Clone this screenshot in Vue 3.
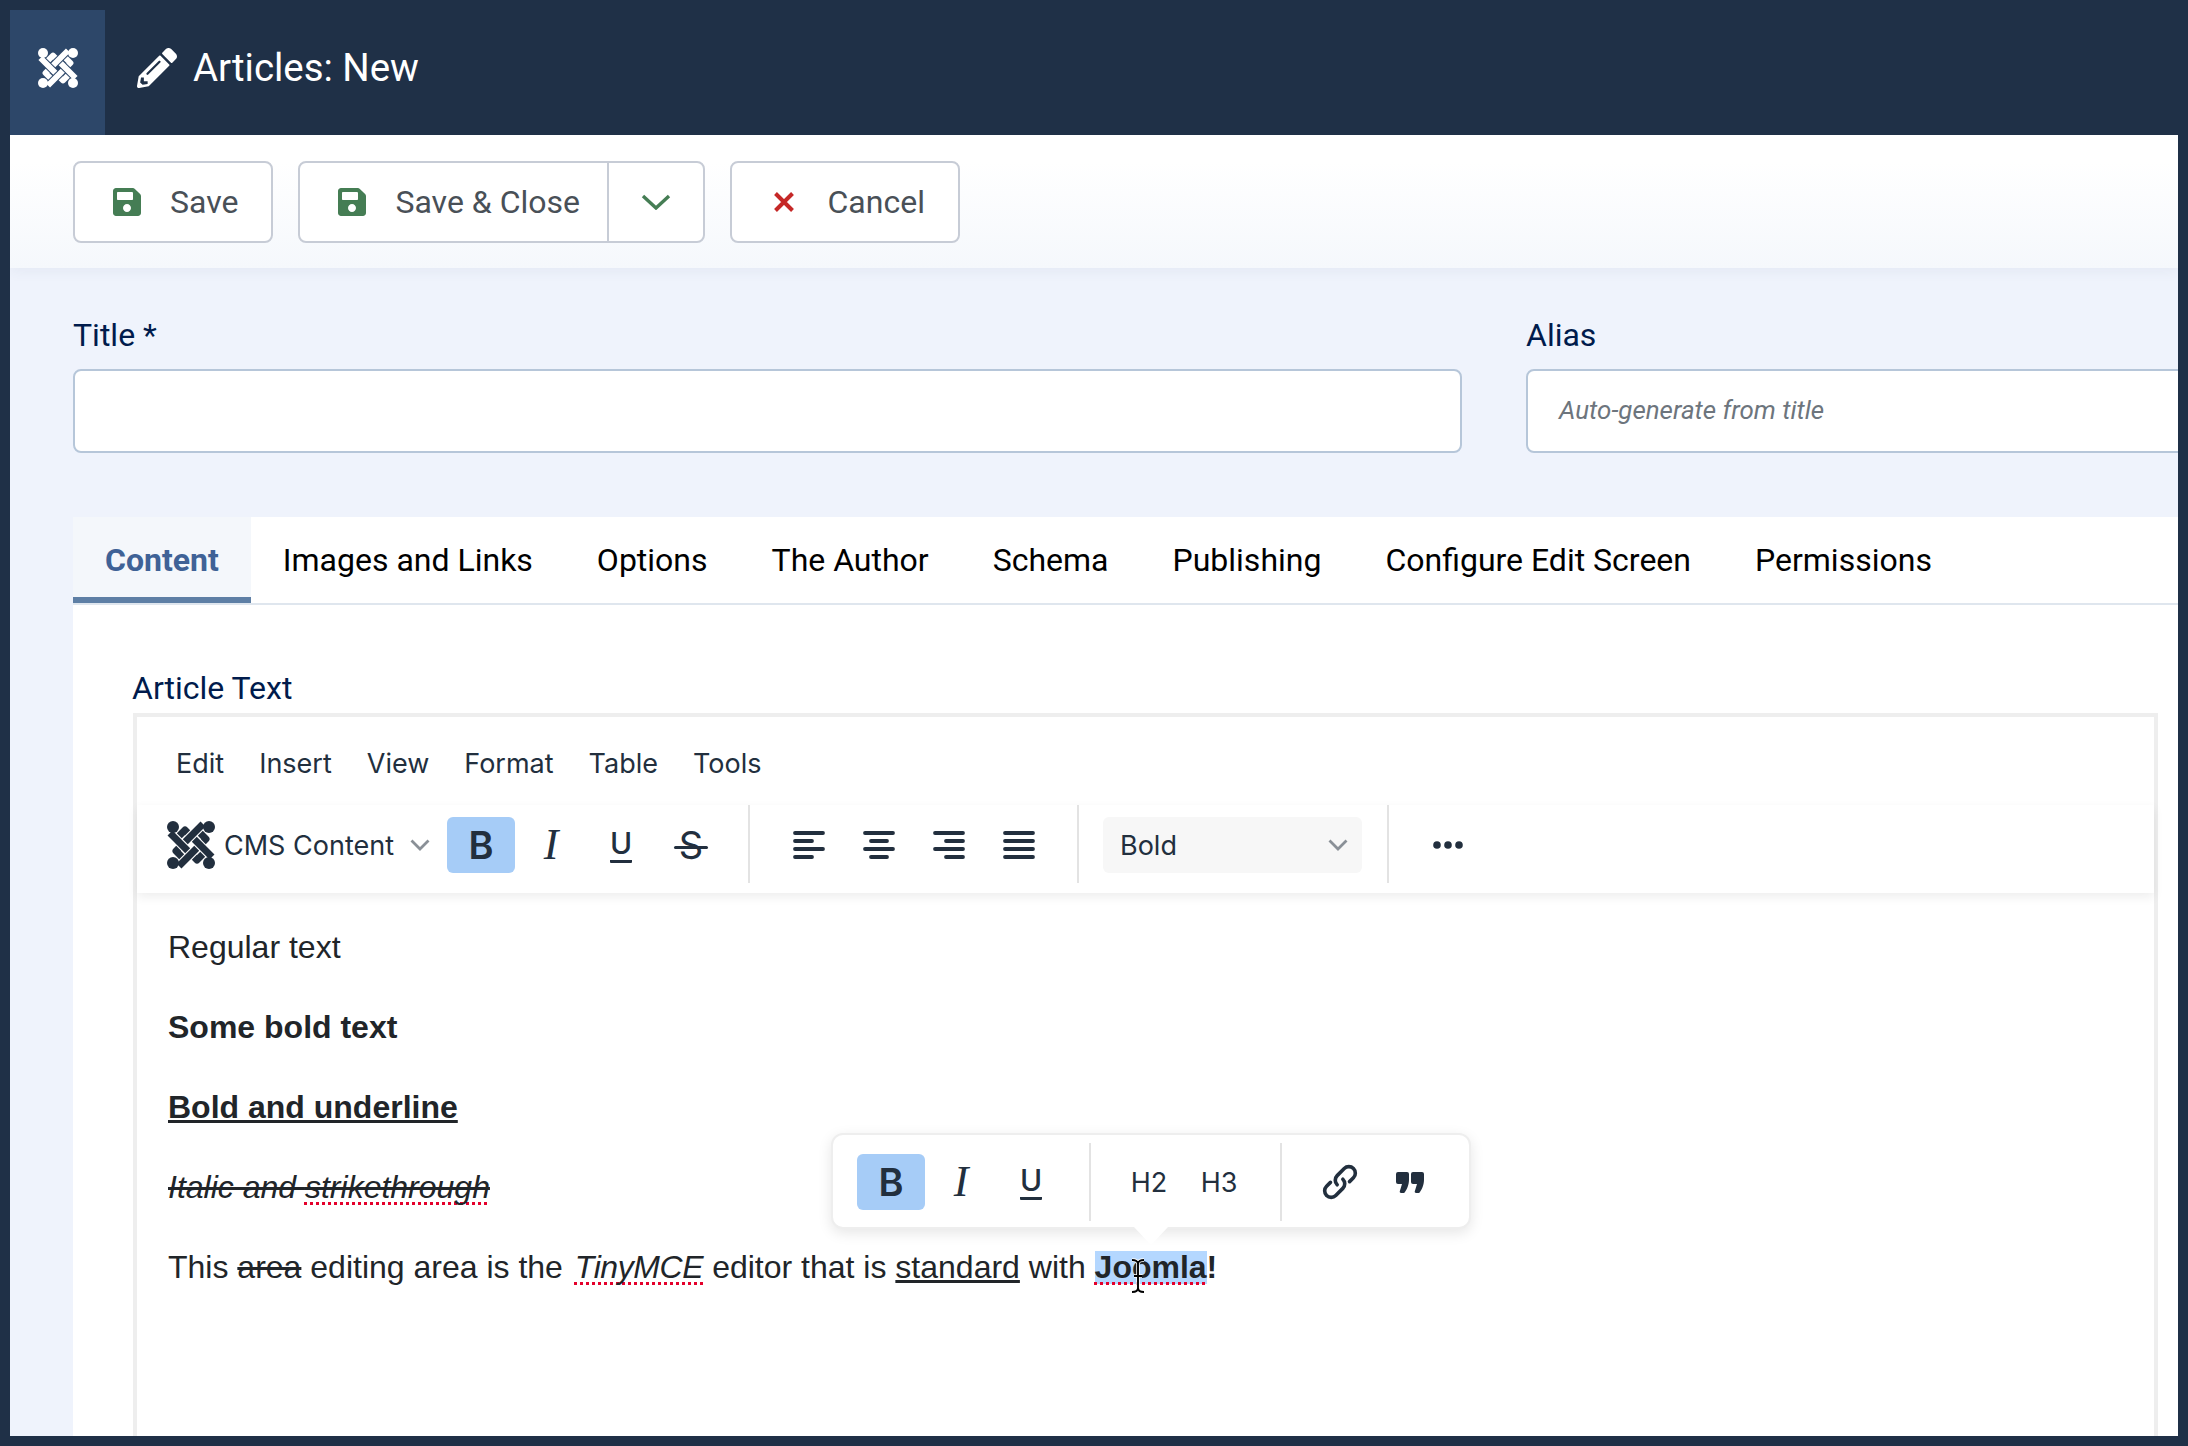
<script setup>
const tabs = ['Content', 'Images and Links', 'Options', 'The Author', 'Schema', 'Publishing', 'Configure Edit Screen', 'Permissions']
const menus = ['Edit', 'Insert', 'View', 'Format', 'Table', 'Tools']
const knot = 'M3 12L20.700 29.700M27.300 36.300L30 39L35.700 33.300M36 3L18.300 20.700M11.700 27.300L9 30L14.700 35.700M45 36L27.300 18.300M20.700 11.700L18 9L12.300 14.700M12 45L29.700 27.300M36.300 20.700L39 18L33.300 12.300'
const aligns = [
  { name: 'left', lines: [[2, 30], [2, 19], [2, 30], [2, 19]] },
  { name: 'center', lines: [[2, 30], [8, 24], [2, 30], [8, 24]] },
  { name: 'right', lines: [[2, 30], [13, 30], [2, 30], [13, 30]] },
  { name: 'justify', lines: [[2, 30], [2, 30], [2, 30], [2, 30]] }
]
const savePath = 'M433.941 129.941l-83.882-83.882A48 48 0 0 0 316.118 32H48C21.49 32 0 53.49 0 80v352c0 26.51 21.49 48 48 48h352c26.51 0 48-21.49 48-48V163.882a48 48 0 0 0-14.059-33.941zM224 416c-35.346 0-64-28.654-64-64 0-35.346 28.654-64 64-64s64 28.654 64 64c0 35.346-28.654 64-64 64zm96-304.52V212c0 6.627-5.373 12-12 12H76c-6.627 0-12-5.373-12-12V108c0-6.627 5.373-12 12-12h228.52c3.183 0 6.235 1.264 8.485 3.515l3.48 3.48A11.996 11.996 0 0 1 320 111.48z'
</script>

<template>
  <div class="root">
    <header class="header">
      <div class="logo-box">
        <svg class="logo-white" viewBox="0 0 48 48">
          <path :d="knot" fill="none" stroke="#fff" stroke-width="7" stroke-linejoin="round" />
          <circle cx="6" cy="6" r="6" fill="#fff" /><circle cx="42" cy="6" r="6" fill="#fff" />
          <circle cx="6" cy="42" r="6" fill="#fff" /><circle cx="42" cy="42" r="6" fill="#fff" />
        </svg>
      </div>
      <svg class="pencil" viewBox="0 0 512 512"><path fill="#fff" d="M497.9 142.1l-46.1 46.1c-4.7 4.7-12.3 4.7-17 0l-111-111c-4.7-4.7-4.7-12.3 0-17l46.1-46.1c18.7-18.7 49.1-18.7 67.9 0l60.1 60.1c18.8 18.7 18.8 49.1 0 67.9zM284.2 99.8L21.6 362.4.4 483.9c-2.9 16.4 11.4 30.6 27.8 27.8l121.5-21.3 262.6-262.6c4.7-4.7 4.7-12.3 0-17l-111-111c-4.8-4.7-12.4-4.7-17.1 0zM124.1 339.9c-5.5-5.5-5.5-14.3 0-19.8l154-154c5.5-5.5 14.3-5.5 19.8 0s5.5 14.3 0 19.8l-154 154c-5.5 5.5-14.3 5.5-19.8 0zM88 424h48v36.3l-64.5 11.3-31.1-31.1L51.7 376H88v48z" /></svg>
      <h1 class="page-title">Articles: New</h1>
    </header>

    <main class="main">
      <div class="actions">
        <button class="btn">
          <svg class="btn-ico" viewBox="0 0 448 512"><path fill="#457d54" :d="savePath" /></svg>
          <span>Save</span>
        </button>
        <div class="btn-split">
          <button class="btn inner">
            <svg class="btn-ico" viewBox="0 0 448 512"><path fill="#457d54" :d="savePath" /></svg>
            <span>Save &amp; Close</span>
          </button>
          <button class="caret-btn">
            <svg width="30" height="16" viewBox="0 0 30 16"><path d="M2 2L15 14L28 2" fill="none" stroke="#457d54" stroke-width="3.400" /></svg>
          </button>
        </div>
        <button class="btn">
          <svg class="x-ico" width="22" height="22" viewBox="0 0 22 22"><path d="M2.500 2.500L19.500 19.500M19.500 2.500L2.500 19.500" stroke="#c52827" stroke-width="4" /></svg>
          <span>Cancel</span>
        </button>
      </div>

      <section class="fields">
        <div class="field title-field">
          <label class="label">Title *</label>
          <div class="input"></div>
        </div>
        <div class="field alias-field">
          <label class="label">Alias</label>
          <div class="input"><span class="placeholder">Auto-generate from title</span></div>
        </div>
      </section>

      <section class="panel">
        <nav class="tabs">
          <div v-for="(t, i) in tabs" :key="t" class="tab" :class="{ active: i === 0 }">{{ t }}</div>
        </nav>
        <div class="panel-body">
          <div class="label article-label">Article Text</div>
          <div class="editor">
            <div class="menubar">
              <span v-for="m in menus" :key="m">{{ m }}</span>
            </div>
            <div class="toolbar">
              <div class="group first">
                <div class="cms">
                  <svg class="logo-dark" viewBox="0 0 48 48">
                    <path :d="knot" fill="none" stroke="#222f3e" stroke-width="7" stroke-linejoin="round" />
                    <circle cx="6" cy="6" r="6" fill="#222f3e" /><circle cx="42" cy="6" r="6" fill="#222f3e" />
                    <circle cx="6" cy="42" r="6" fill="#222f3e" /><circle cx="42" cy="42" r="6" fill="#222f3e" />
                  </svg>
                  <span class="cms-text">CMS Content</span>
                  <svg class="chev" width="20" height="12" viewBox="0 0 20 12"><path d="M1.500 1.500L10 10L18.500 1.500" fill="none" stroke="#8a9097" stroke-width="2.800" /></svg>
                </div>
                <div class="tb-btn on"><span class="g-b">B</span></div>
                <div class="tb-btn"><span class="g-i">I</span></div>
                <div class="tb-btn"><span class="g-u">U</span></div>
                <div class="tb-btn"><span class="g-s">S</span></div>
              </div>
              <div class="group second">
                <div v-for="a in aligns" :key="a.name" class="tb-btn">
                  <svg width="32" height="32" viewBox="0 0 32 32">
                    <path v-for="(l, i) in a.lines" :key="i" :d="`M${l[0]} ${4 + i * 8}H${l[1]}`" stroke="#222f3e" stroke-width="3.800" stroke-linecap="round" />
                  </svg>
                </div>
              </div>
              <div class="group third">
                <div class="select">
                  <span>Bold</span>
                  <svg width="20" height="12" viewBox="0 0 20 12"><path d="M1.500 1.500L10 10L18.500 1.500" fill="none" stroke="#8a9097" stroke-width="2.800" /></svg>
                </div>
              </div>
              <div class="group last">
                <div class="tb-btn">
                  <svg width="32" height="8" viewBox="0 0 32 8"><circle cx="5" cy="4" r="3.800" fill="#222f3e" /><circle cx="16" cy="4" r="3.800" fill="#222f3e" /><circle cx="27" cy="4" r="3.800" fill="#222f3e" /></svg>
                </div>
              </div>
            </div>

            <div class="content">
              <p>Regular text</p>
              <p><strong>Some bold text</strong></p>
              <p><strong><u>Bold and underline</u></strong></p>
              <p><s><em>Italic and <span class="spell">strikethrough</span></em></s></p>
              <p>This <s>area</s> editing area is the&nbsp;<em class="spell tiny">TinyMCE</em> editor that is <u>standard</u> with <strong><span class="selected spell">Joomla</span>!</strong></p>
            </div>

            <div class="popup">
              <div class="group">
                <div class="tb-btn on"><span class="g-b">B</span></div>
                <div class="tb-btn"><span class="g-i">I</span></div>
                <div class="tb-btn"><span class="g-u">U</span></div>
              </div>
              <div class="group headings">
                <div class="tb-btn"><span class="g-h">H2</span></div>
                <div class="tb-btn"><span class="g-h">H3</span></div>
              </div>
              <div class="group last">
                <div class="tb-btn">
                  <svg width="38" height="38" viewBox="0 0 38 38"><g transform="rotate(-45 19 19)" fill="none" stroke="#222f3e" stroke-width="3.600" stroke-linecap="round"><path d="M23 19a6.500 6.500 0 0 1 -6.500 6.500H6.500a6.500 6.500 0 0 1 0 -13H12" /><path d="M15 19a6.500 6.500 0 0 1 6.500 -6.500H31.500a6.500 6.500 0 0 1 0 13H26" /></g></svg>
                </div>
                <div class="tb-btn">
                  <svg width="28" height="21" viewBox="0 0 28 21"><path fill="#222f3e" d="M2 0h9a2 2 0 0 1 2 2v6c0 5-2.500 10-4 12a2 2 0 0 1-2 1H5c-1 0-1.500-.8-1.200-1.700L6 12H2a2 2 0 0 1-2-2V2a2 2 0 0 1 2-2zM17 0h9a2 2 0 0 1 2 2v6c0 5-2.500 10-4 12a2 2 0 0 1-2 1h-2c-1 0-1.500-.8-1.200-1.700L21 12h-4a2 2 0 0 1-2-2V2a2 2 0 0 1 2-2z" /></svg>
                </div>
              </div>
              <span class="popup-arrow"></span>
            </div>

            <svg class="ibeam" width="16" height="36" viewBox="0 0 16 36" fill="none">
              <path d="M2 2c3 0 6 1 6 4v24c0 3-3 4-6 4M14 2c-3 0-6 1-6 4v24c0 3 3 4 6 4M4 18h8" stroke="#fff" stroke-width="3.500" />
              <path d="M2 2c3 0 6 1 6 4v24c0 3-3 4-6 4M14 2c-3 0-6 1-6 4v24c0 3 3 4 6 4M4 18h8" stroke="#000" stroke-width="1.900" />
            </svg>
          </div>
        </div>
      </section>
    </main>
  </div>
</template>

<style>
html, body { margin: 0; padding: 0; background: #1f3047; }
</style>

<style scoped>
* { box-sizing: border-box; }
.root {
  width: 2188px; height: 1446px; padding: 0 10px 10px; background: #1f3047;
  display: flex; flex-direction: column; overflow: hidden;
  font-family: Roboto, "Liberation Sans", sans-serif;
}
.header { height: 135px; display: flex; align-items: center; flex: none; }
.logo-box { width: 95px; height: 125px; align-self: flex-end; padding-bottom: 10px; background: #2d4769; display: flex; align-items: center; justify-content: center; }
.logo-white { width: 40px; height: 40px; }
.pencil { width: 40px; height: 40px; margin-left: 32px; }
.page-title { margin: 2px 0 0 16px; color: #fff; font-weight: 400; font-size: 38.400px; line-height: 1; }

.main { flex: 1; min-height: 0; background: #eff3fc; overflow: hidden; display: flex; flex-direction: column; }
.actions {
  height: 133px; flex: none; padding: 26px 0 0 63px; display: flex; gap: 25px; align-items: flex-start;
  background: linear-gradient(#fff 0%, #fff 20%, #f5f8fc 100%);
  box-shadow: 0 4px 12px rgba(60, 80, 120, .06);
  position: relative;
}
.btn {
  height: 82px; padding: 0 33px 0 38px; background: #fff; border: 2px solid #c7ccd6; border-radius: 8px;
  display: flex; align-items: center; font: 400 32px Roboto, sans-serif; color: #495057;
}
.btn-ico { width: 28px; height: 32px; margin-right: 29px; }
.x-ico { margin: 0 32.500px 0 3px; }
.btn-split { height: 82px; display: flex; background: #fff; border: 2px solid #c7ccd6; border-radius: 8px; }
.btn.inner { border: 0; height: 78px; background: none; padding-right: 27px; }
.caret-btn { width: 96px; border: 0; border-left: 2px solid #c7ccd6; background: none; padding: 0; display: flex; align-items: center; justify-content: center; }

.fields { flex: none; display: flex; padding: 43px 0 0 63px; gap: 64px; }
.field { flex: none; }
.title-field { width: 1389px; }
.alias-field { width: 800px; }
.label { display: block; font-size: 32px; line-height: 48px; color: #001b4c; }
.input { height: 84px; margin-top: 10px; background: #fff; border: 2px solid #b6c6d9; border-radius: 8px; display: flex; align-items: center; padding: 0 0 2px 31px; }
.placeholder { font-size: 25.900px; font-style: italic; color: #6d757d; }

.panel { margin: 64px 0 0 63px; flex: 1; min-height: 0; background: #fff; }
.tabs { display: flex; height: 88px; border-bottom: 2px solid #dfe6ee; }
.tab { height: 86px; padding: 0 32px; font-size: 32px; line-height: 86px; color: #000; }
.tab.active { background: #f4f7fb; color: #3f6296; font-weight: 700; border-bottom: 6px solid #5e7fa5; }
.panel-body { padding: 59px 20px 0 60px; }
.article-label { height: 49px; margin-left: -1px; }

.editor { position: relative; height: 900px; border: 4px solid #eee; }
.menubar {
  height: 88px; padding: 29px 0 0 39px; display: flex; gap: 35px;
  font: 400 27px/36px Inter, sans-serif; color: #222f3e;
}
.toolbar {
  height: 88px; padding: 0 0 10px 30px; display: flex; align-items: stretch;
  box-shadow: 0 4px 10px rgba(0, 0, 0, .07); position: relative; background: #fff;
}
.group { display: flex; align-items: center; padding: 2px 24px 0; border-right: 2px solid #e3e3e3; }
.group.first { padding-left: 0; padding-right: 22px; }
.group.second { padding-right: 23px; }
.group.third { padding-right: 25px; }
.group.last { border-right: 0; padding-right: 0; }
.cms { width: 279px; display: flex; align-items: center; }
.logo-dark { width: 48px; height: 48px; flex: none; }
.cms-text { font: 400 27px Inter, sans-serif; color: #222f3e; margin-left: 9px; white-space: nowrap; }
.chev { margin-left: 16px; flex: none; }
.tb-btn { width: 68px; height: 56px; margin: 0 1px; border-radius: 6px; display: flex; align-items: center; justify-content: center; color: #222f3e; flex: none; }
.tb-btn.on { background: #a6ccf7; }
.g-b { font: 600 38px/1 Inter, sans-serif; }
.g-i { font: italic 400 44px/1 "Liberation Serif", serif; }
.g-u { font: 500 30px/1 Inter, sans-serif; border-bottom: 3.500px solid #222f3e; border-radius: 1px; padding: 0 0 2px; width: 22px; text-align: center; display: flex; justify-content: center; }
.g-s { font: 400 38px/1 Inter, sans-serif; position: relative; }
.g-s::after { content: ""; position: absolute; left: -5px; right: -5px; top: 50%; height: 3.400px; margin-top: 1px; background: #222f3e; border-radius: 2px; }
.g-h { font: 400 27px/1 Inter, sans-serif; }
.select {
  width: 259px; height: 56px; background: #f7f7f7; border-radius: 6px; display: flex; align-items: center;
  justify-content: space-between; padding: 0 14px 0 17px; font: 400 27px Inter, sans-serif; color: #222f3e;
}

.content { padding: 30px 0 0 31px; font: 400 32px/48px "Liberation Sans", Arial, sans-serif; color: #212529; }
.content p { margin: 0 0 32px; }
.spell { text-decoration: underline dotted #e4002b 3.400px; text-underline-offset: 4px; text-decoration-skip-ink: none; }
.tiny { margin-left: 3px; letter-spacing: -.4px; }
.selected { background: linear-gradient(#b4d7ff, #b4d7ff) center / 100% 33px no-repeat; }

.popup {
  position: absolute; left: 694px; top: 416px; width: 640px; height: 96px; padding: 8px 0 0 23px;
  background: #fff; border: 2px solid #eee; border-radius: 12px; display: flex; align-items: flex-start;
  box-shadow: 0 4px 14px rgba(0, 0, 0, .1);
}
.popup .group { height: 78px; padding: 0 23px; }
.popup .group:first-child { padding-left: 0; }
.popup .group.headings { padding-right: 26px; }
.popup-arrow {
  position: absolute; left: 301px; bottom: -18px; width: 34px; height: 18px; background: #fff;
  clip-path: polygon(0 0, 100% 0, 50% 100%);
}
.ibeam { position: absolute; left: 993px; top: 541px; pointer-events: none; }
</style>
